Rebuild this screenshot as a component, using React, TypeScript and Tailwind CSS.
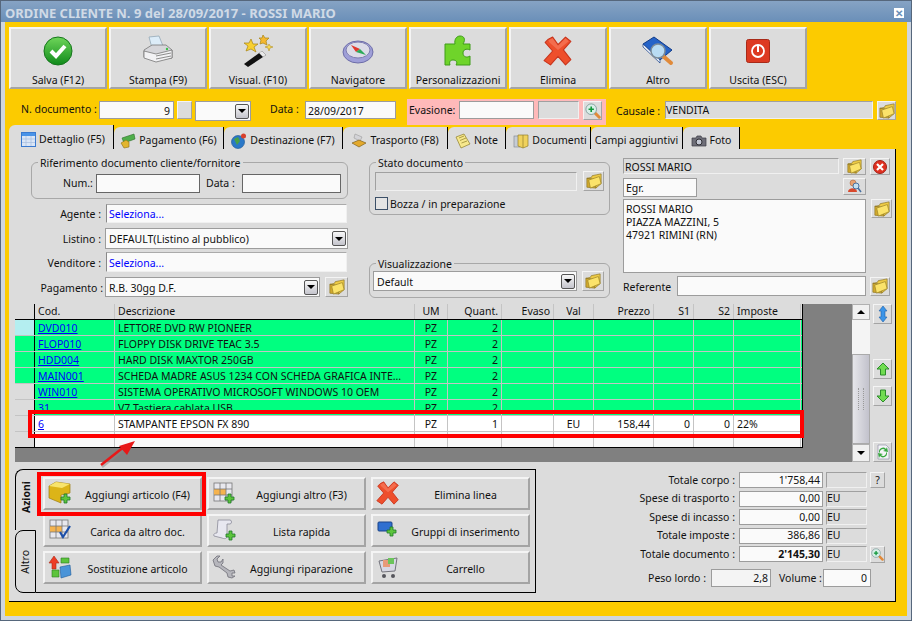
import type { ReactNode } from 'react';

const raised = 'border-2 border-t-[#f4f4f4] border-l-[#f4f4f4] border-r-[#a4a4a4] border-b-[#a4a4a4] bg-[#dcdcdc]';
const sunken = 'border border-[#9c9c9c] bg-[#fafafa]';
const grayField = 'border border-[#a0a0a0] border-r-[#f0f0f0] border-b-[#f0f0f0] bg-[#dcdcdc]';

function Folder({ s = 17 }: { s?: number }) {
    return (
        <svg width={s} height={s} viewBox="0 0 18 18">
            <path d="M1 6 L1 16 L11 17 L11 7 Z" fill="#d2a92c" stroke="#8f7826" strokeWidth="0.8" />
            <path d="M1 6 L6 5 L7 3 L12 2 L17 1 L17 12 L11 17 L11 7 Z" fill="#eecb45" stroke="#8f7826" strokeWidth="0.8" />
            <path d="M3 8 L15 4 L17 12 L5 17 Z" fill="#fbe36a" stroke="#9c8428" strokeWidth="0.8" />
        </svg>
    );
}

function ZoomPlus({ s = 17 }: { s?: number }) {
    return (
        <svg width={s} height={s} viewBox="0 0 18 18">
            <path d="M10 10 L16 16" stroke="#e08a3a" strokeWidth="3.4" strokeLinecap="round" />
            <circle cx="7" cy="7" r="6" fill="#d8efe8" stroke="#7f9c9c" />
            <path d="M4 7 H10 M7 4 V10" stroke="#10983a" strokeWidth="1.8" />
        </svg>
    );
}

function PlusBadge({ x, y }: { x: number; y: number }) {
    return (
        <path
            transform={`translate(${x} ${y})`}
            d="M3 0 H6 V3 H9 V6 H6 V9 H3 V6 H0 V3 H3 Z"
            fill="#5cc43c"
            stroke="#1f7a2a"
            strokeWidth="0.8"
        />
    );
}

function RedCross({ s = 24 }: { s?: number }) {
    return (
        <svg width={s} height={s} viewBox="0 0 28 28">
            <path
                d="M5 3 L9 1 L14 8 L21 1 L26 5 L19 13 L26 22 L21 27 L14 19 L7 27 L1 23 L9 14 L2 6 Z"
                fill="#ee4f2c"
                stroke="#c8341c"
                strokeLinejoin="round"
            />
            <path d="M5 4 L9 2 L14 9 L21 2 L24 5 L14 13 L6 6 Z" fill="#f77b5c" opacity="0.7" />
        </svg>
    );
}

function Grid3({ check }: { check?: boolean }) {
    return (
        <svg width="22" height="22" viewBox="0 0 22 22">
            <rect x="1" y="1" width="18" height="18" fill="#e8e8ee" stroke="#777" strokeWidth="0.8" />
            <rect x="1" y="7" width="12" height="6" fill="#f5b34e" />
            <path d="M1 7 H19 M1 13 H19 M7 1 V19 M13 1 V19" stroke="#777" strokeWidth="0.8" />
            {check ? (
                <path d="M11 13 L14 18 L21 7" fill="none" stroke="#1c4fa8" strokeWidth="2.2" />
            ) : (
                <PlusBadge x={12} y={12} />
            )}
        </svg>
    );
}

const toolIcons: Record<string, ReactNode> = {
    salva: (
        <svg width="30" height="30" viewBox="0 0 30 30">
            <defs>
                <linearGradient id="sg" x1="0" y1="0" x2="0" y2="1">
                    <stop offset="0" stopColor="#6fd65a" />
                    <stop offset="1" stopColor="#0f8a1a" />
                </linearGradient>
            </defs>
            <circle cx="15" cy="15" r="14" fill="url(#sg)" stroke="#15761c" />
            <path d="M8 15 L13 20 L22 10" fill="none" stroke="#fff" strokeWidth="4" />
        </svg>
    ),
    stampa: (
        <svg width="32" height="32" viewBox="0 0 32 32">
            <path d="M7 2 L17 1 L21 11 L10 13 Z" fill="#dcecf8" stroke="#8aa0b0" strokeWidth="0.7" />
            <path d="M2 15 L10 10 L24 10 L30 15 L30 23 L14 25 L2 22 Z" fill="#d6d6da" stroke="#777" strokeWidth="0.8" />
            <path d="M2 16 L14 19 L30 15 L30 23 L14 27 L2 23 Z" fill="#f2f2f4" stroke="#777" strokeWidth="0.8" />
            <path d="M14 21 L29 18 M14 24 L29 21" stroke="#8d8d8d" />
            <circle cx="25" cy="14" r="1.2" fill="#3cc04a" />
        </svg>
    ),
    visual: (
        <svg width="32" height="32" viewBox="0 0 32 32">
            <path d="M2 29 L20 16 L24 20 L6 32 Z" fill="#111" />
            <path d="M17 18 L20 16 L24 20 L21 22 Z" fill="#e8e8e8" />
            <path d="M9 4 L11 9 L16 9 L12 12 L14 17 L9 14 L4 16 L6 11 L2 8 L7 8 Z" fill="#f8d030" stroke="#a88414" strokeWidth="0.7" />
            <path d="M21 0 L23 3 L27 3 L24 6 L25 10 L21 8 L18 9 L19 5 L17 3 L20 3 Z" fill="#f5b82e" stroke="#a88414" strokeWidth="0.7" />
            <path d="M27 9 L28 11 L31 12 L28 13 L27 16 L26 13 L23 12 L26 11 Z" fill="#f8d850" stroke="#a88414" strokeWidth="0.5" />
        </svg>
    ),
    navigatore: (
        <svg width="32" height="26" viewBox="0 0 32 26">
            <ellipse cx="16" cy="14" rx="15" ry="11" fill="#9f9fd8" stroke="#6d6da8" />
            <ellipse cx="16" cy="12" rx="12" ry="8" fill="#dcdce8" stroke="#7d7db0" />
            <path d="M9 7 L18 11 L14 14 Z" fill="#e0382c" />
            <path d="M24 17 L18 11 L14 14 Z" fill="#2caa5a" />
        </svg>
    ),
    puzzle: (
        <svg width="28" height="32" viewBox="0 0 28 32">
            <path
                d="M1 9 H11 C10 4 13 1 16 1 C20 1 22 4 19 9 H26 V15 C22 13 19 15 19 18 C19 22 23 23 26 21 V30 H12 C14 27 12 25 9 25 C6 25 5 27 6 30 H1 Z"
                fill="#6fd42a"
                stroke="#3e9c18"
            />
        </svg>
    ),
    elimina: <RedCross s={30} />,
    altro: (
        <svg width="32" height="30" viewBox="0 0 32 30">
            <path d="M1 8 L12 1 L30 14 L18 24 Z" fill="#2563c8" stroke="#123c88" />
            <path d="M1 8 L18 24 L18 27 L1 11 Z" fill="#e8eef8" stroke="#123c88" strokeWidth="0.7" />
            <path d="M21 20 L29 27" stroke="#e08a3a" strokeWidth="4" strokeLinecap="round" />
            <circle cx="16" cy="15" r="7" fill="#b9dcf4" stroke="#7d8c98" strokeWidth="1.5" />
        </svg>
    ),
    uscita: (
        <svg width="24" height="24" viewBox="0 0 24 24">
            <rect x="0.5" y="0.5" width="23" height="23" rx="2" fill="#dd3a22" stroke="#a82a18" />
            <circle cx="12" cy="12" r="6" fill="none" stroke="#fff" strokeWidth="1.8" />
            <path d="M12 7 V13" stroke="#fff" strokeWidth="2" />
        </svg>
    ),
};

const toolbar = [
    { key: 'salva', label: 'Salva (F12)' },
    { key: 'stampa', label: 'Stampa (F9)' },
    { key: 'visual', label: 'Visual. (F10)' },
    { key: 'navigatore', label: 'Navigatore' },
    { key: 'puzzle', label: 'Personalizzazioni' },
    { key: 'elimina', label: 'Elimina' },
    { key: 'altro', label: 'Altro' },
    { key: 'uscita', label: 'Uscita (ESC)' },
];

const tabIcons: Record<string, ReactNode> = {
    dettaglio: (
        <svg width="15" height="15" viewBox="0 0 15 15">
            <rect x="0.5" y="0.5" width="14" height="14" fill="#dbe6f6" stroke="#3a7ad0" />
            <rect x="1" y="1" width="13" height="3" fill="#4a94e8" />
            <path d="M5 4 V14 M10 4 V14 M1 7 H14 M1 10.5 H14" stroke="#a8bde0" strokeWidth="0.7" />
        </svg>
    ),
    pagamento: (
        <svg width="16" height="16" viewBox="0 0 16 16">
            <path d="M2 5 L14 1 L15 6 L4 10 Z" fill="#4fae4a" stroke="#2d6e2a" strokeWidth="0.6" />
            <path d="M1 10 L6 7 L9 9 L9 14 L4 15 Z" fill="#e2b52e" stroke="#8c6e14" strokeWidth="0.6" />
        </svg>
    ),
    destinazione: (
        <svg width="16" height="16" viewBox="0 0 16 16">
            <circle cx="7" cy="9" r="6.5" fill="#2a78c8" stroke="#14508e" strokeWidth="0.6" />
            <path d="M3 6 L7 4 L9 8 L6 12 Z" fill="#48a048" />
            <circle cx="12.5" cy="3" r="2.5" fill="#d8402c" />
        </svg>
    ),
    trasporto: (
        <svg width="16" height="16" viewBox="0 0 16 16">
            <path d="M4 1 L11 4 L9 8 L3 5 Z" fill="#d4d4d8" stroke="#9a9a9a" strokeWidth="0.6" />
            <path d="M1 10 L8 7 L15 10 L8 14 Z" fill="#e3a92c" stroke="#6f5010" strokeWidth="0.6" />
        </svg>
    ),
    note: (
        <svg width="16" height="16" viewBox="0 0 16 16">
            <path d="M1 4 L9 1 L15 11 L6 15 Z" fill="#f7e88c" stroke="#8c7c28" strokeWidth="0.7" />
            <path d="M4 5 L9 3 M5 7.5 L11 5 M6.5 10 L12 8" stroke="#8c7c28" strokeWidth="0.7" />
        </svg>
    ),
    documenti: (
        <svg width="16" height="16" viewBox="0 0 16 16">
            <rect x="1" y="3" width="6" height="11" fill="#c6ccd6" stroke="#7c828c" strokeWidth="0.6" />
            <path d="M5 2 H15 V13 L10 15 L5 13 Z" fill="#f0d25c" stroke="#94802c" strokeWidth="0.7" />
            <path d="M10 2 V15" stroke="#94802c" strokeWidth="0.7" />
        </svg>
    ),
    foto: (
        <svg width="16" height="16" viewBox="0 0 16 16">
            <path d="M1 5 H5 L6 3 H10 L11 5 H15 V13 H1 Z" fill="#6e6e78" stroke="#3a3a42" strokeWidth="0.7" />
            <circle cx="8" cy="9" r="3" fill="#c4c8d4" stroke="#2e2e34" />
        </svg>
    ),
};

const tabs = [
    { label: 'Dettaglio (F5)', icon: 'dettaglio', w: 'w-[105px] pl-[4px]', active: true },
    { label: 'Pagamento (F6)', icon: 'pagamento', w: 'w-[110px]' },
    { label: 'Destinazione (F7)', icon: 'destinazione', w: 'w-[119px]' },
    { label: 'Trasporto (F8)', icon: 'trasporto', w: 'w-[105px]' },
    { label: 'Note', icon: 'note', w: 'w-[58px]' },
    { label: 'Documenti', icon: 'documenti', w: 'w-[85px] pl-[4px]' },
    { label: 'Campi aggiuntivi', icon: '', w: 'w-[92px]' },
    { label: 'Foto', icon: 'foto', w: 'w-[57px]' },
];

const cols = [
    { title: 'Cod.', w: 'w-[80px]', cls: 'text-left' },
    { title: 'Descrizione', w: 'w-[300px]', cls: 'text-left' },
    { title: 'UM', w: 'w-[33px]', cls: 'text-center' },
    { title: 'Quant.', w: 'w-[54px]', cls: 'text-right' },
    { title: 'Evaso', w: 'w-[52px]', cls: 'text-right' },
    { title: 'Val', w: 'w-[40px]', cls: 'text-center' },
    { title: 'Prezzo', w: 'w-[60px]', cls: 'text-right' },
    { title: 'S1', w: 'w-[40px]', cls: 'text-right' },
    { title: 'S2', w: 'w-[40px]', cls: 'text-right' },
    { title: 'Imposte', w: 'w-[67px]', cls: 'text-left' },
];

const rows = [
    { head: 'bg-[#b4eef0]', bg: 'bg-[#00ff80]', cells: ['DVD010', 'LETTORE DVD RW PIONEER', 'PZ', '2', '', '', '', '', '', ''] },
    { head: 'bg-[#00ff80]', bg: 'bg-[#00ff80]', cells: ['FLOP010', 'FLOPPY DISK DRIVE TEAC 3.5', 'PZ', '2', '', '', '', '', '', ''] },
    { head: 'bg-[#00ff80]', bg: 'bg-[#00ff80]', cells: ['HDD004', 'HARD DISK MAXTOR 250GB', 'PZ', '2', '', '', '', '', '', ''] },
    { head: 'bg-[#00ff80]', bg: 'bg-[#00ff80]', cells: ['MAIN001', 'SCHEDA MADRE ASUS 1234 CON SCHEDA GRAFICA INTE...', 'PZ', '2', '', '', '', '', '', ''] },
    { head: 'bg-[#dcdcdc]', bg: 'bg-[#00ff80]', cells: ['WIN010', 'SISTEMA OPERATIVO MICROSOFT WINDOWS 10 OEM', 'PZ', '2', '', '', '', '', '', ''] },
    { head: 'bg-[#dcdcdc]', bg: 'bg-[#00ff80]', cells: ['31', 'V7 Tastiera cablata USB', 'PZ', '2', '', '', '', '', '', ''] },
    { head: 'bg-[#dcdcdc]', bg: 'bg-white', cells: ['6', 'STAMPANTE EPSON FX 890', 'PZ', '1', '', 'EU', '158,44', '0', '0', '22%'] },
    { head: 'bg-[#dcdcdc]', bg: 'bg-[#f8f8f8]', cells: ['', '', '', '', '', '', '', '', '', ''] },
];

const actions: { label: string; icon: ReactNode }[] = [
    {
        label: 'Aggiungi articolo (F4)',
        icon: (
            <svg width="24" height="24" viewBox="0 0 24 24">
                <path d="M1 5 L8 1 L22 3 L22 12 L13 14 L13 22 L1 17 Z" fill="#dcb418" stroke="#9c7c10" strokeWidth="0.7" />
                <path d="M1 5 L8 1 L22 3 L14 7 Z" fill="#f8e46c" />
                <PlusBadge x={13} y={13} />
            </svg>
        ),
    },
    { label: 'Aggiungi altro (F3)', icon: <Grid3 /> },
    { label: 'Elimina linea', icon: <RedCross s={24} /> },
    { label: 'Carica da altro doc.', icon: <Grid3 check /> },
    {
        label: 'Lista rapida',
        icon: (
            <svg width="24" height="24" viewBox="0 0 24 24">
                <path d="M6 2 H18 C20 2 20 6 18 6 L15 6 L15 18 C15 21 12 21 10 20 L2 18 C1 16 3 15 5 15 Z" fill="#e8e8f0" stroke="#8a8a98" strokeWidth="0.8" />
                <PlusBadge x={14} y={13} />
            </svg>
        ),
    },
    {
        label: 'Gruppi di inserimento',
        icon: (
            <svg width="24" height="24" viewBox="0 0 24 24">
                <rect x="2" y="4" width="14" height="9" rx="1" fill="#2f6fd0" stroke="#1c4488" />
                <PlusBadge x={11} y={9} />
            </svg>
        ),
    },
    {
        label: 'Sostituzione articolo',
        icon: (
            <svg width="24" height="24" viewBox="0 0 24 24">
                <path d="M6 1 L11 8 H8 V14 H4 V8 H1 Z" fill="#ee3c24" stroke="#a82a18" strokeWidth="0.6" />
                <path d="M13 3 L21 3 L21 8 L13 8 Z" fill="#5cc43c" stroke="#2c7c22" strokeWidth="0.6" />
                <path d="M4 15 L11 15 L11 22 L4 22 Z" fill="#5cc43c" stroke="#2c7c22" strokeWidth="0.6" />
                <path d="M12 12 L22 10 L23 20 L13 23 Z" fill="#4a94d8" stroke="#1c5a98" strokeWidth="0.6" />
            </svg>
        ),
    },
    {
        label: 'Aggiungi riparazione',
        icon: (
            <svg width="24" height="24" viewBox="0 0 24 24">
                <path
                    d="M1 5 L5 1 L8 1 L5 4 L6 7 L9 7 L11 4 L11 8 L9 10 L18 16 L22 15 L23 18 L20 18 L20 21 L23 21 L20 23 L16 22 L15 18 L7 12 L3 11 Z"
                    fill="#b6b6bc"
                    stroke="#707078"
                    strokeWidth="0.8"
                />
            </svg>
        ),
    },
    {
        label: 'Carrello',
        icon: (
            <svg width="24" height="24" viewBox="0 0 24 24">
                <path d="M3 6 L21 3 L19 16 L6 17 Z" fill="#d8d8e4" stroke="#74747c" />
                <rect x="7" y="5" width="7" height="7" fill="#e89a78" />
                <rect x="12" y="3" width="6" height="6" fill="#6cc45c" />
                <circle cx="8" cy="21" r="2" fill="#55555c" />
                <circle cx="17" cy="21" r="2" fill="#55555c" />
            </svg>
        ),
    },
];

const totals = [
    { label: 'Totale corpo :', value: "1'758,44", cur: '', bold: false },
    { label: 'Spese di trasporto :', value: '0,00', cur: 'EU', bold: false },
    { label: 'Spese di incasso :', value: '0,00', cur: 'EU', bold: false },
    { label: 'Totale imposte :', value: '386,86', cur: 'EU', bold: false },
    { label: 'Totale documento :', value: "2'145,30", cur: 'EU', bold: true },
];

function IconBtn({ className = '', children }: { className?: string; children?: ReactNode }) {
    return <div className={`flex shrink-0 items-center justify-center ${raised} ${className}`}>{children}</div>;
}

function Drop() {
    return (
        <div className="flex h-[15px] w-[14px] shrink-0 items-center justify-center rounded-[2px] border border-[#555] bg-gradient-to-b from-[#f8f8f8] to-[#c4c4cc]">
            <div className="h-0 w-0 border-x-[4px] border-t-[4px] border-x-transparent border-t-black" />
        </div>
    );
}

function Combo({ className = '', children }: { className?: string; children?: ReactNode }) {
    return (
        <div className={`flex shrink-0 items-center justify-between border border-[#9c9c9c] bg-[#fafafa] pl-[3px] pr-[1px] ${className}`}>
            <span className="pt-[2px]">{children}</span>
            <Drop />
        </div>
    );
}

function Group({ title, className = '', children }: { title: string; className?: string; children?: ReactNode }) {
    return (
        <div className={`relative rounded-[6px] border border-[#a8a8a8] ${className}`}>
            <span className="absolute left-[6px] top-[-6px] bg-[#dcdcdc] px-[2px] leading-[13px]">{title}</span>
            {children}
        </div>
    );
}

export default function App() {
    return (
        <div className="flex h-[621px] w-[912px] flex-col overflow-hidden border border-[#56677c] bg-[#cfd6de] font-['Noto_Sans'] text-[10.5px] leading-none text-[#111]">
            <div className="flex h-[21px] shrink-0 items-center justify-between bg-gradient-to-b from-[#86a3c4] to-[#6a8fb8] pl-[4px] pr-[7px] pt-[3px]">
                <span className="text-[13px] font-bold text-[#d0dae6]">ORDINE CLIENTE N. 9 del 28/09/2017 - ROSSI MARIO</span>
                <span className="flex h-[10px] w-[10px] items-center justify-center bg-white text-[10px] font-bold text-[#6a8fb8]">✕</span>
            </div>
            <div className="mx-[4px] flex h-[594px] flex-col bg-[#fccb00]">
                {/* Toolbar */}
                <div className="ml-[4px] mt-[5px] flex h-[62px] gap-[2px]">
                    {toolbar.map((b) => (
                        <div key={b.key} className={`flex w-[98px] flex-col items-center ${raised}`}>
                            <div className="flex h-[43px] items-center justify-center">{toolIcons[b.key]}</div>
                            <span className="mt-[3px]">{b.label}</span>
                        </div>
                    ))}
                </div>

                {/* Document row */}
                <div className="mt-[10px] flex h-[26px] items-start">
                    <span className="ml-[16px] mt-[5px] w-[74px] whitespace-nowrap">N. documento :</span>
                    <div className={`ml-[4px] mt-[2px] flex h-[18px] w-[75px] items-center justify-end pr-[3px] pt-[2px] ${sunken}`}>9</div>
                    <IconBtn className="ml-[3px] mt-[2px] h-[18px] w-[15px] !border" />
                    <Combo className="ml-[3px] mt-[2px] h-[20px] w-[56px]" />
                    <span className="ml-[19px] mt-[5px] w-[30px] whitespace-nowrap">Data :</span>
                    <div className={`ml-[5px] mt-[2px] flex h-[18px] w-[91px] items-center pl-[2px] pt-[2px] ${sunken}`}>28/09/2017</div>
                    <div className="ml-[11px] flex h-[26px] w-[199px] items-start bg-[#ffb9b9] pl-[2px] pt-[2px]">
                        <span className="mt-[4px] w-[50px]">Evasione:</span>
                        <div className={`h-[18px] w-[75px] ${sunken}`} />
                        <div className={`ml-[4px] h-[18px] w-[41px] ${grayField}`} />
                        <IconBtn className="ml-[4px] h-[19px] w-[19px] !border">
                            <ZoomPlus s={16} />
                        </IconBtn>
                    </div>
                    <span className="ml-[10px] mt-[7px] w-[44px] whitespace-nowrap">Causale :</span>
                    <div className={`ml-[5px] mt-[2px] flex h-[18px] w-[208px] items-center ${grayField}`}>VENDITA</div>
                    <IconBtn className="ml-[4px] mt-[2px] h-[19px] w-[19px] !border">
                        <Folder s={16} />
                    </IconBtn>
                </div>

                {/* Tabs */}
                <div className="ml-[4px] flex h-[24px] items-end">
                    {tabs.map((t) => (
                        <div
                            key={t.label}
                            className={`flex shrink-0 items-center justify-center gap-[3px] rounded-tl-[6px] border-r border-r-black bg-[#dcdcdc] pt-[5px] ${t.w} ${t.active ? 'h-[24px]' : 'h-[22px]'}`}
                        >
                            {t.icon && tabIcons[t.icon]}
                            <span className="whitespace-nowrap">{t.label}</span>
                        </div>
                    ))}
                </div>

                {/* Panel */}
                <div className="relative ml-[4px] flex h-[453px] w-[887px] flex-col border-b border-r border-black bg-[#dcdcdc]">
                    <div className="flex h-[155px] shrink-0">
                        {/* Left column */}
                        <div className="ml-[22px] flex w-[317px] flex-col pt-[13px]">
                            <Group title="Riferimento documento cliente/fornitore" className="flex h-[37px] items-start pt-[11px]">
                                <span className="ml-[31px] mt-[4px] w-[33px]">Num.:</span>
                                <div className="h-[19px] w-[104px] border border-[#666] bg-[#fafafa]" />
                                <span className="ml-[6px] mt-[4px] w-[36px]">Data :</span>
                                <div className="h-[19px] w-[99px] border border-[#666] bg-[#fafafa]" />
                            </Group>
                            <div className="mt-[5px] flex h-[19px] items-center">
                                <span className="mr-[5px] w-[70px] pt-[2px] text-right">Agente :</span>
                                <div className="flex h-[19px] w-[241px] items-center border border-[#f0f0f0] border-l-[#888] border-t-[#aaa] bg-[#fafafa] pl-[2px] pt-[2px] text-[#0000ff]">Seleziona...</div>
                            </div>
                            <div className="mt-[5px] flex h-[21px] items-center">
                                <span className="mr-[4px] w-[70px] pt-[2px] text-right">Listino :</span>
                                <Combo className="h-[21px] w-[243px]">DEFAULT(Listino al pubblico)</Combo>
                            </div>
                            <div className="mt-[3px] flex h-[20px] items-center">
                                <span className="mr-[5px] w-[70px] pt-[2px] text-right">Venditore :</span>
                                <div className="flex h-[20px] w-[241px] items-center border border-[#f0f0f0] border-l-[#888] border-t-[#aaa] bg-[#fafafa] pl-[2px] pt-[2px] text-[#0000ff]">Seleziona...</div>
                            </div>
                            <div className="mt-[5px] flex h-[20px] items-center">
                                <span className="mr-[2px] w-[72px] whitespace-nowrap pt-[2px] text-right">Pagamento :</span>
                                <Combo className="h-[20px] w-[215px]">R.B. 30gg D.F.</Combo>
                                <IconBtn className="ml-[5px] h-[20px] w-[23px] !border">
                                    <Folder s={16} />
                                </IconBtn>
                            </div>
                        </div>

                        {/* Middle column */}
                        <div className="ml-[21px] flex w-[241px] flex-col pt-[13px]">
                            <Group title="Stato documento" className="h-[53px]">
                                <div className="ml-[5px] mt-[8px] flex items-center">
                                    <div className={`h-[19px] w-[202px] ${grayField}`} />
                                    <IconBtn className="ml-[6px] h-[20px] w-[21px] !border">
                                        <Folder s={16} />
                                    </IconBtn>
                                </div>
                                <div className="ml-[5px] mt-[6px] flex items-center gap-[2px]">
                                    <div className="h-[13px] w-[13px] border border-[#3c5068] bg-[#e4e4e4]" />
                                    <span className="pt-[2px]">Bozza / in preparazione</span>
                                </div>
                            </Group>
                            <Group title="Visualizzazione" className="mt-[48px] h-[35px]">
                                <div className="ml-[3px] mt-[7px] flex items-center">
                                    <Combo className="h-[20px] w-[204px]">Default</Combo>
                                    <IconBtn className="ml-[5px] h-[20px] w-[22px] !border">
                                        <Folder s={16} />
                                    </IconBtn>
                                </div>
                            </Group>
                        </div>

                        {/* Customer column */}
                        <div className="ml-[13px] flex w-[269px] flex-col pt-[9px]">
                            <div className="flex h-[17px] items-start">
                                <div className={`flex h-[16px] w-[216px] items-center pl-[1px] pt-[2px] ${grayField}`}>ROSSI MARIO</div>
                                <IconBtn className="ml-[4px] h-[17px] w-[23px] !border">
                                    <Folder s={15} />
                                </IconBtn>
                                <IconBtn className="ml-[4px] h-[17px] w-[20px] !border">
                                    <svg width="14" height="14" viewBox="0 0 14 14">
                                        <circle cx="7" cy="7" r="6.5" fill="#e03020" stroke="#a02018" />
                                        <path d="M4 4 L10 10 M10 4 L4 10" stroke="#fff" strokeWidth="2.2" />
                                    </svg>
                                </IconBtn>
                            </div>
                            <div className="mt-[3px] flex h-[19px] items-start">
                                <div className={`flex h-[19px] w-[74px] items-center pl-[2px] pt-[2px] ${sunken}`}>Egr.</div>
                                <IconBtn className="ml-[146px] h-[17px] w-[23px] !border">
                                    <svg width="15" height="15" viewBox="0 0 15 15">
                                        <circle cx="6" cy="4" r="3" fill="#e8a070" stroke="#a05830" strokeWidth="0.5" />
                                        <path d="M1 13 C1 8 10 8 10 13 Z" fill="#d8482c" />
                                        <circle cx="9" cy="7" r="3" fill="#c4e0f0" stroke="#4870a0" />
                                        <path d="M11 9 L14 13" stroke="#4870a0" strokeWidth="1.5" />
                                    </svg>
                                </IconBtn>
                            </div>
                            <div className="mt-[2px] flex items-start">
                                <div className={`flex h-[74px] w-[243px] flex-col px-[2px] pt-[4px] ${sunken}`}>
                                    <div className="h-[13px]">ROSSI MARIO</div>
                                    <div className="h-[13px]">PIAZZA MAZZINI, 5</div>
                                    <div className="h-[13px]">47921 RIMINI (RN)</div>
                                </div>
                                <IconBtn className="ml-[5px] h-[19px] w-[21px] !border">
                                    <Folder s={16} />
                                </IconBtn>
                            </div>
                            <div className="mt-[3px] flex h-[20px] items-center">
                                <span className="w-[54px] pt-[2px]">Referente</span>
                                <div className={`h-[20px] w-[189px] ${sunken}`} />
                                <IconBtn className="ml-[4px] h-[19px] w-[20px] !border">
                                    <Folder s={16} />
                                </IconBtn>
                            </div>
                        </div>
                    </div>

                    {/* Articles grid */}
                    <div className="ml-[6px] flex h-[158px] shrink-0">
                        <div className="flex w-[837px] flex-col bg-[#808080]">
                            <div className="w-[788px] border-r border-black">
                                <div className="flex h-[16px] border-b border-black bg-[#dcdcdc]">
                                    <div className="w-[20px] shrink-0 border-r border-black" />
                                    {cols.map((c) => (
                                        <div key={c.title} className={`shrink-0 border-r border-[#c4c4c4] px-[3px] leading-[14px] ${c.w} ${c.cls}`}>
                                            {c.title}
                                        </div>
                                    ))}
                                </div>
                                {rows.map((r, i) => (
                                    <div key={i} className={`flex h-[16px] border-b ${i === 7 ? 'border-black' : 'border-[#c4c4c4]'} ${r.bg}`}>
                                        <div className={`w-[20px] shrink-0 border-r border-r-black ${r.head}`} />
                                        {cols.map((c, j) => (
                                            <div
                                                key={c.title}
                                                className={`shrink-0 overflow-hidden whitespace-nowrap border-r border-[#c4c4c4] px-[3px] leading-[17px] ${c.w} ${c.cls} ${j === 0 ? 'text-[#0000ff] underline' : ''}`}
                                            >
                                                {r.cells[j]}
                                            </div>
                                        ))}
                                    </div>
                                ))}
                            </div>
                        </div>
                        <div className="flex w-[18px] shrink-0 flex-col bg-[#c8c8d0]">
                            <div className="flex h-[16px] items-center justify-center border border-[#b0b0b0] bg-[#f0f0f0]">
                                <div className="h-0 w-0 border-x-[4px] border-b-[4px] border-x-transparent border-b-black" />
                            </div>
                            <div className="h-[34px] bg-[#f4f4f4]" />
                            <div className="flex h-[90px] items-center justify-center border border-[#aaa] bg-gradient-to-r from-[#e6e6ea] to-[#c2c2cc]">
                                <div className="h-[22px] w-[6px] border-x border-dotted border-[#999]" />
                            </div>
                            <div className="flex h-[18px] items-center justify-center border border-[#b0b0b0] bg-[#f0f0f0]">
                                <div className="h-0 w-0 border-x-[4px] border-t-[4px] border-x-transparent border-t-black" />
                            </div>
                        </div>
                        <div className="ml-[3px] flex w-[19px] shrink-0 flex-col">
                            <IconBtn className="h-[20px] !border">
                                <svg width="10" height="16" viewBox="0 0 10 16">
                                    <path d="M5 0 L9 5 H7 V11 H9 L5 16 L1 11 H3 V5 H1 Z" fill="#3a94e8" stroke="#1c60a8" strokeWidth="0.6" />
                                </svg>
                            </IconBtn>
                            <IconBtn className="mt-[35px] h-[20px] !border">
                                <svg width="14" height="14" viewBox="0 0 14 14">
                                    <path d="M7 1 L13 7 H9.5 V13 H4.5 V7 H1 Z" fill="#70dc50" stroke="#2c8c2a" />
                                </svg>
                            </IconBtn>
                            <IconBtn className="mt-[7px] h-[20px] !border">
                                <svg width="14" height="14" viewBox="0 0 14 14">
                                    <path d="M7 13 L13 7 H9.5 V1 H4.5 V7 H1 Z" fill="#70dc50" stroke="#2c8c2a" />
                                </svg>
                            </IconBtn>
                            <IconBtn className="mt-[36px] h-[20px] !border">
                                <svg width="16" height="16" viewBox="0 0 16 16">
                                    <path d="M3 1 H11 L14 4 V15 H3 Z" fill="#f4f4f8" stroke="#8888a0" strokeWidth="0.6" />
                                    <path d="M4 8 A4 4 0 0 1 11 5 L12 3 L13 8 L8 7 L10 6 A3 3 0 0 0 5 9 Z" fill="#38a840" />
                                    <path d="M12 9 A4 4 0 0 1 5 12 L4 14 L3 9 L8 10 L6 11 A3 3 0 0 0 11 8 Z" fill="#38a840" />
                                </svg>
                            </IconBtn>
                        </div>
                    </div>

                    {/* Bottom area */}
                    <div className="ml-[6px] mt-[7px] flex">
                        <div className="flex h-[124px] w-[521px] shrink-0">
                            <div className="flex w-[21px] shrink-0 flex-col">
                                <div className="flex h-[61px] items-center justify-center rounded-tl-[8px] border-l border-t border-black pb-[5px] font-bold">
                                    <span className="rotate-180 [writing-mode:vertical-rl]">Azioni</span>
                                </div>
                                <div className="flex h-[63px] items-center justify-center rounded-l-[8px] border border-black">
                                    <span className="rotate-180 [writing-mode:vertical-rl]">Altro</span>
                                </div>
                            </div>
                            <div className="grid flex-1 grid-cols-[159px_159px_159px] grid-rows-[33px_33px_33px] gap-x-[5px] gap-y-[4px] border-b border-r border-t border-black pl-[7px] pt-[7px]">
                                {actions.map((a) => (
                                    <div key={a.label} className={`flex items-center ${raised}`}>
                                        <div className="flex w-[30px] shrink-0 justify-center pb-[2px]">{a.icon}</div>
                                        <span className="flex-1 whitespace-nowrap pt-[3px] text-center">{a.label}</span>
                                    </div>
                                ))}
                            </div>
                        </div>
                        <div className="flex flex-1 flex-col pt-[3px]">
                            <div className="flex flex-col gap-[2.5px]">
                                {totals.map((t, i) => (
                                    <div key={t.label} className="flex h-[16px] items-center">
                                        <span className="mr-[4px] w-[199px] whitespace-nowrap text-right">{t.label}</span>
                                        <div className={`flex h-[16px] w-[84px] items-center justify-end pr-[2px] ${sunken} ${t.bold ? 'font-bold' : ''}`}>{t.value}</div>
                                        <div className={`ml-[3px] flex h-[16px] w-[41px] items-center ${grayField}`}>{t.cur}</div>
                                        {i === 0 && <IconBtn className="ml-[3px] h-[16px] w-[15px] !border">?</IconBtn>}
                                        {i === 4 && (
                                            <IconBtn className="ml-[3px] h-[17px] w-[15px] !border">
                                                <ZoomPlus s={13} />
                                            </IconBtn>
                                        )}
                                    </div>
                                ))}
                            </div>
                            <div className="mt-[7px] flex h-[18px] items-center">
                                <span className="w-[170px] whitespace-nowrap text-right">Peso lordo :</span>
                                <div className="ml-[5px] flex h-[18px] w-[60px] items-center justify-end border border-[#9c9c9c] bg-[#f4f4f4] pr-[2px]">2,8</div>
                                <span className="ml-[8px] w-[41px] whitespace-nowrap">Volume :</span>
                                <div className="ml-[3px] flex h-[18px] w-[48px] items-center justify-end border border-[#9c9c9c] bg-[#fafafa] pr-[3px]">0</div>
                            </div>
                        </div>
                    </div>

                    {/* Highlights drawn over the page */}
                    <div className="pointer-events-none absolute left-[19px] top-[261px] h-[28px] w-[776px] border-[4px] border-[#ff0000]" />
                    <div className="pointer-events-none absolute left-[28px] top-[323px] h-[44px] w-[169px] border-[4px] border-[#ff0000]" />
                    <svg className="pointer-events-none absolute left-[85px] top-[288px]" width="50" height="34" viewBox="0 0 50 34">
                        <path d="M8 30 L32 11" stroke="#888" strokeWidth="2.5" opacity="0.5" />
                        <path d="M7 28 L31 9" stroke="#e81818" strokeWidth="2.5" />
                        <path d="M41 4 L25 9 L33 18 Z" fill="#e81818" />
                    </svg>
                </div>
            </div>
        </div>
    );
}
